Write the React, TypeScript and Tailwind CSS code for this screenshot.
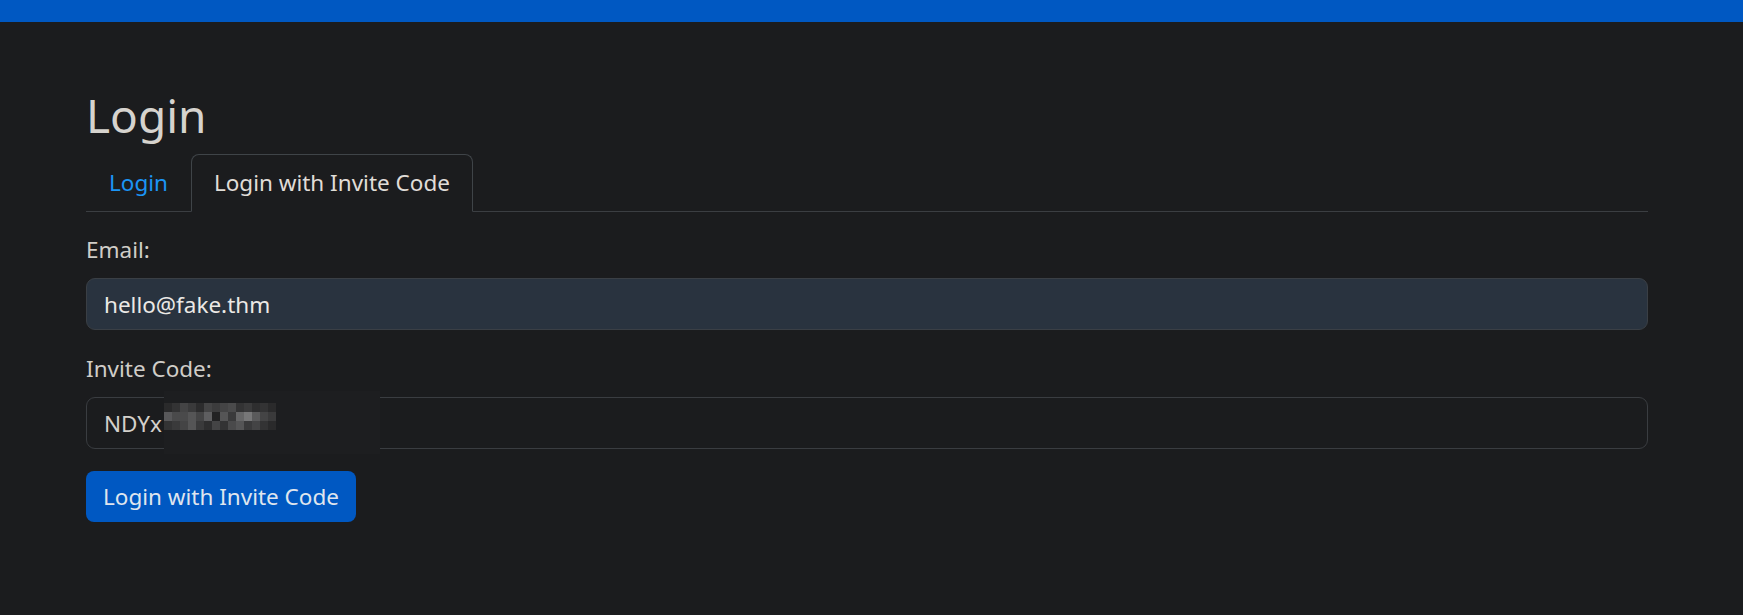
import { useState } from "react";

// pixelated patch that covers the rest of the invite code
const mosaic = [
  ["#2a2a2b", "#333334", "#444445", "#3a3a3b", "#2c2c2d", "#444445", "#3c3c3d", "#444445", "#4a4a4b", "#333334", "#3a3a3b", "#2e2e2f", "#333334", "#2a2a2b"],
  ["#58585a", "#4a4a4b", "#4a4a4b", "#555556", "#444445", "#5e5e60", "#222223", "#555556", "#3a3a3b", "#666667", "#777778", "#5a5a5b", "#444445", "#3a3a3b"],
  ["#333334", "#3a3a3b", "#444445", "#555556", "#3a3a3b", "#2e2e2f", "#444445", "#333334", "#4a4a4b", "#555556", "#3a3a3b", "#444445", "#333334", "#2a2a2b"],
];

export default function App() {
  const [tab, setTab] = useState<"login" | "invite">("invite");
  const [email, setEmail] = useState("hello@fake.thm");
  const [code, setCode] = useState("NDYx");

  return (
    <div
      className="min-h-screen bg-[#1b1c1e] text-[#d3d0cb]"
      style={{ fontFamily: '"Noto Sans", "Open Sans", sans-serif' }}
    >
      {/* Top bar */}
      <div className="h-[22px] bg-[#0058c2]" />

      <div className="pl-[86px] pr-[95px] pt-[65px]">
        <h1 className="text-[46px] leading-[57px] font-normal text-[#d6d3ce]">Login</h1>

        {/* Tabs */}
        <div className="mt-[10px] flex border-b border-[#3b3e42] text-[22.5px] leading-[33px]">
          <button
            onClick={() => setTab("login")}
            className={
              tab === "login"
                ? "-mb-px rounded-t-[8px] border border-[#3f4448] border-b-[#1b1c1e] bg-[#1b1c1e] px-[22px] pt-[11px] pb-[12px] text-[#e0ddd8]"
                : "-mb-px rounded-t-[8px] border border-transparent px-[22px] pt-[11px] pb-[12px] text-[#1b95f5]"
            }
          >
            Login
          </button>
          <button
            onClick={() => setTab("invite")}
            className={
              tab === "invite"
                ? "-mb-px rounded-t-[8px] border border-[#3f4448] border-b-[#1b1c1e] bg-[#1b1c1e] px-[22px] pt-[11px] pb-[12px] text-[#e0ddd8]"
                : "-mb-px rounded-t-[8px] border border-transparent px-[22px] pt-[11px] pb-[12px] text-[#1b95f5]"
            }
          >
            Login with Invite Code
          </button>
        </div>

        {/* Form */}
        <form className="text-[22.5px] leading-[33px]" onSubmit={(e) => e.preventDefault()}>
          <label className="mt-[21px] block text-[#d0cdc8]">Email:</label>
          <input
            value={email}
            onChange={(e) => setEmail(e.target.value)}
            className="mt-[12px] block h-[52px] w-full rounded-[9px] border border-[#3a3f45] bg-[#29333f] px-[17px] text-[#ebe9e6] outline-none"
          />

          <label className="mt-[22px] block text-[#d0cdc8]">Invite Code:</label>
          <div className="relative mt-[12px]">
            <input
              value={code}
              onChange={(e) => setCode(e.target.value)}
              className="block h-[52px] w-full rounded-[9px] border border-[#3a3d41] bg-[#1b1c1e] px-[17px] text-[#d3d0cb] outline-none"
            />
            {/* blurred-out part */}
            <div className="absolute left-[78px] top-[-6px] flex h-[63px] w-[216px] items-start bg-[#1d1e20] pt-[12px]">
              <div className="flex flex-col">
                {mosaic.map((row, i) => (
                  <div key={i} className="flex">
                    {row.map((c, j) => (
                      <div key={j} className="h-[9px] w-[8px]" style={{ background: c }} />
                    ))}
                  </div>
                ))}
              </div>
            </div>
          </div>

          <button
            type="submit"
            className="mt-[22px] h-[51px] rounded-[8px] bg-[#0058c2] px-[17px] text-[#dfe5ee]"
          >
            Login with Invite Code
          </button>
        </form>
      </div>
    </div>
  );
}
